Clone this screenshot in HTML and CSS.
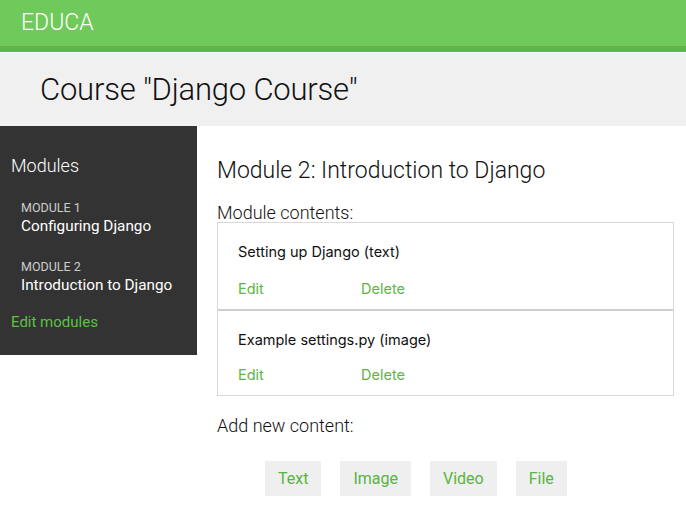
FILE: index.html
```html
<!DOCTYPE html>
<html>
<head>
<meta charset="utf-8">
<link rel="stylesheet" href="styles.css">
</head>
<body>
<header class="topbar"><span class="logo">EDUCA</span></header>
<div class="titleband"><h1>Course "Django Course"</h1></div>
<div class="page">
  <aside class="sidebar">
    <h3>Modules</h3>
    <ul class="modules">
      <li><span class="order">MODULE 1</span><span class="mtitle">Configuring Django</span></li>
      <li><span class="order">MODULE 2</span><span class="mtitle">Introduction to Django</span></li>
    </ul>
    <a class="edit-modules" href="#">Edit modules</a>
  </aside>
  <main class="content">
    <h2>Module 2: Introduction to Django</h2>
    <h3 class="label">Module contents:</h3>
    <div class="contents">
      <div class="item">
        <p>Setting up Django (text)</p>
        <div class="actions"><a href="#" class="edit">Edit</a><a href="#">Delete</a></div>
      </div>
      <div class="item">
        <p>Example settings.py (image)</p>
        <div class="actions"><a href="#" class="edit">Edit</a><a href="#">Delete</a></div>
      </div>
    </div>
    <h3 class="label add">Add new content:</h3>
    <ul class="buttons">
      <li><a href="#">Text</a></li>
      <li><a href="#">Image</a></li>
      <li><a href="#">Video</a></li>
      <li><a href="#">File</a></li>
    </ul>
  </main>
</div>
</body>
</html>
```

FILE: styles.css
```css
* { box-sizing: border-box; }
html, body { margin: 0; padding: 0; background: #fff; }
body { font-family: Roboto, "Liberation Sans", sans-serif; color: #222; }
a { text-decoration: none; color: #5cb644; }
ul { list-style: none; margin: 0; padding: 0; }

.topbar {
  height: 52px;
  background: #70c95b;
  border-bottom: 6px solid #5fb54a;
  padding: 9px 0 0 21px;
}
.logo { color: #fff; font-size: 23px; font-weight: 300; letter-spacing: 0; }

.titleband {
  background: #f0f0f0;
  border-top: 1px solid #fafafa;
  height: 74px;
  padding: 18px 0 0 40px;
}
.titleband h1 { margin: 0; font-size: 31px; font-weight: 300; color: #111; letter-spacing: -0.2px; }

.page { display: flex; align-items: flex-start; }

.sidebar {
  width: 197px;
  flex: none;
  background: #333;
  padding: 29px 0 0 11px;
  height: 229px;
}
.sidebar h3 { margin: 0 0 24px; font-size: 18px; font-weight: 300; color: #fff; line-height: 21px; }
.modules li { padding-left: 10px; margin-bottom: 22px; }
.modules li:last-child { margin-bottom: 0; }
.order { display: block; color: #ccc; font-size: 12.5px; line-height: 16px; }
.mtitle { display: block; color: #fff; font-size: 15.3px; line-height: 21px; }
.edit-modules { font-size: 15px; color: #5cc145; display: block; margin-top: 17px; }

.content { flex: 1; padding: 31px 12px 0 20px; }
.content h2 { margin: 0 0 19px; font-size: 23px; font-weight: 300; color: #111; line-height: 27px; }
.label { margin: 0; font-size: 18px; font-weight: 300; color: #111; line-height: 19px; }

.contents { border: 1px solid #d8d8d8; }
.item { padding: 20px 20px 0; height: 86px; font-family: Inter, Roboto, sans-serif; }
.item + .item { border-top: 2px solid #ccd0cc; padding-top: 20px; }
.item p { margin: 0; font-size: 14.5px; color: #111; line-height: 18px; }
.actions { display: flex; margin-top: 19px; font-size: 14.5px; }
.item + .item .actions { margin-top: 17px; }
.actions a { color: #5cb644; }
.actions .edit { width: 123px; }

.add { margin-top: 20px; }
.buttons { display: flex; gap: 19px; padding: 26px 0 0 48px; }
.buttons a {
  display: block;
  height: 35px;
  line-height: 35px;
  padding: 0 13px;
  background: #efefef;
  font-size: 16px;
  color: #58b540;
}
```
